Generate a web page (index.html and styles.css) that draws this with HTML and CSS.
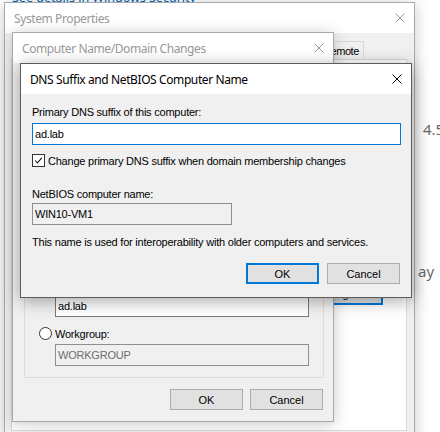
FILE: index.html
```html
<!DOCTYPE html>
<html>
<head>
<meta charset="utf-8">
<link rel="stylesheet" href="styles.css">
</head>
<body>
<div class="desk">
  <div class="bgwin">
    <span class="bg-link">See details in Windows Security</span>
    <span class="bg-num">4.5</span>
    <span class="bg-ay">ay</span>
  </div>

  <div class="win sysprops">
    <div class="titlebar inactive">
      <span class="title">System Properties</span>
      <svg class="close" viewBox="0 0 10 10"><path d="M0.5 0.5L9.5 9.5M9.5 0.5L0.5 9.5"/></svg>
    </div>
    <div class="sp-body">
      <div class="tabs">
        <span class="tab">Remote</span>
      </div>
      <div class="tabpage">
        <div class="change-row"><span class="btn btn-focus">Change...</span></div>
      </div>
    </div>
  </div>

  <div class="win cn">
    <div class="titlebar inactive">
      <span class="title">Computer Name/Domain Changes</span>
      <svg class="close" viewBox="0 0 10 10"><path d="M0.5 0.5L9.5 9.5M9.5 0.5L0.5 9.5"/></svg>
    </div>
    <div class="cn-body">
      <div class="groupbox">
        <div class="radio-row"><span class="radio"></span><span>Domain:</span></div>
        <div class="field field-white cn-field">ad.lab</div>
        <div class="radio-row wg-row"><span class="radio"></span><span>Workgroup:</span></div>
        <div class="field field-disabled cn-field wg-field">WORKGROUP</div>
      </div>
      <div class="btn-row cn-btns">
        <span class="btn">OK</span>
        <span class="btn">Cancel</span>
      </div>
    </div>
  </div>

  <div class="win dns">
    <div class="titlebar active">
      <span class="title">DNS Suffix and NetBIOS Computer Name</span>
      <svg class="close" viewBox="0 0 10 10"><path d="M0.5 0.5L9.5 9.5M9.5 0.5L0.5 9.5"/></svg>
    </div>
    <div class="dns-body">
      <div class="label">Primary DNS suffix of this computer:</div>
      <div class="field field-white field-focus dns-suffix">ad.lab</div>
      <div class="check-row">
        <span class="checkbox"><svg viewBox="0 0 13 13"><path d="M2.5 6.5L5.2 9.3L10.5 3.3"/></svg></span>
        <span>Change primary DNS suffix when domain membership changes</span>
      </div>
      <div class="label netbios-label">NetBIOS computer name:</div>
      <div class="field field-disabled netbios-field">WIN10-VM1</div>
      <div class="label info">This name is used for interoperability with older computers and services.</div>
      <div class="btn-row dns-btns">
        <span class="btn btn-default">OK</span>
        <span class="btn">Cancel</span>
      </div>
    </div>
  </div>
</div>
</body>
</html>
```

FILE: styles.css
```css
* { box-sizing: border-box; }
html, body { margin: 0; padding: 0; }
body {
  width: 440px;
  height: 432px;
  overflow: hidden;
  background: #ffffff;
  font-family: "Liberation Sans", Arial, sans-serif;
  font-size: 11px;
  letter-spacing: -0.22px;
  color: #000;
}
.desk { position: relative; width: 440px; height: 432px; overflow: hidden; }

/* background window fragments */
.bgwin { position: absolute; left: 0; top: 0; width: 440px; height: 432px; }
.bg-link {
  position: absolute; left: 12px; top: -10px;
  font-family: "Noto Sans", sans-serif; font-size: 12.5px; line-height: 16px;
  letter-spacing: 0; color: #0063b1; white-space: nowrap;
}
.bg-num, .bg-ay {
  position: absolute;
  font-family: "Noto Sans", sans-serif; font-size: 15px; line-height: 20px;
  letter-spacing: 0; color: #6b6b6b;
}
.bg-num { left: 423px; top: 119px; }
.bg-ay { left: 418px; top: 261px; }

/* windows */
.win {
  position: absolute;
  display: flex;
  flex-direction: column;
  background: #f0f0f0;
  border: 1px solid #a9a9a9;
  box-shadow: 0 2px 14px rgba(0, 0, 0, 0.22);
}
.titlebar {
  flex: none;
  height: 30px;
  background: #fff;
  display: flex;
  align-items: center;
  justify-content: space-between;
  padding: 0 9px 0 9px;
  font-family: "Noto Sans", sans-serif;
  font-size: 12px;
  letter-spacing: -0.4px;
}
.titlebar .close { width: 10px; height: 10px; display: block; }
.titlebar .close path { stroke-width: 1; fill: none; }
.inactive .title { color: #999; }
.inactive .close path { stroke: #999; }
.active .title { color: #000; }
.active .close path { stroke: #000; }

/* System Properties */
.sysprops { left: 4px; top: 2px; width: 411px; height: 445px; }
.sp-body { flex: 1; display: flex; flex-direction: column; padding: 8px 7px 0 6px; }
.tabs { display: flex; justify-content: flex-end; height: 18px; padding-right: 43px; }
.tab {
  display: flex; align-items: center; justify-content: center;
  padding: 1px 4px 0 6px; border: 1px solid #d9d9d9; border-bottom: none;
  background: #f0f0f0; letter-spacing: -0.4px;
}
.tabpage {
  height: 372px;
  background: #fff;
  border: 1px solid #d9d9d9;
  padding: 222px 23px 0 0;
}
.change-row { display: flex; justify-content: flex-end; }

/* buttons */
.btn {
  display: flex; align-items: center; justify-content: center;
  width: 73px; height: 21px;
  background: #e1e1e1; border: 1px solid #adadad;
  letter-spacing: 0;
}
.btn-focus { width: 86px; height: 23px; border: 2px solid #0078d7; }
.btn-default { border: 2px solid #0078d7; }
.btn-row { display: flex; justify-content: flex-end; }

/* Computer Name window */
.cn { left: 12px; top: 32px; width: 322px; height: 390px; }
.cn-body {
  flex: 1; display: flex; flex-direction: column; justify-content: flex-end;
  padding: 0 9px 11px 11px;
}
.groupbox { border: 1px solid #dcdcdc; padding: 0 14px 11px 14px; }
.radio-row { display: flex; align-items: center; gap: 3px; height: 13px; }
.radio {
  width: 13px; height: 13px; border-radius: 50%;
  border: 1px solid #333; background: #fff;
}
.field {
  height: 22px; border: 1px solid #7a7a7a;
  display: flex; align-items: center; padding-left: 2px;
}
.field-white { background: #fff; }
.field-disabled { background: #f0f0f0; border-color: #8f8f8f; }
.cn-field { margin: 4px 0 0 16px; }
.wg-row { margin-top: 10px; }
.wg-field { color: #6d6d6d; }
.cn-btns { margin-top: 11px; gap: 7px; padding-right: 1px; }

/* DNS dialog */
.dns {
  left: 20px; top: 63px; width: 392px; height: 235px;
  border-color: #5c5c5c;
  box-shadow: 0 3px 16px rgba(0, 0, 0, 0.35);
}
.dns-body { flex: 1; display: flex; flex-direction: column; padding: 12px 10px 0 11px; }
.label { line-height: 13px; }
.field-focus { border-color: #0078d7; }
.dns-suffix { margin-top: 4px; }
.check-row { display: flex; align-items: center; gap: 3px; height: 13px; margin-top: 9px; }
.checkbox {
  width: 13px; height: 13px; border: 1px solid #333; background: #fff;
  display: block;
}
.checkbox svg { display: block; width: 11px; height: 11px; }
.checkbox path { fill: none; stroke: #000; stroke-width: 1.2; }
.netbios-label { margin-top: 21px; }
.netbios-field { width: 200px; margin-top: 2px; }
.info { margin-top: 11px; }
.dns-btns { margin-top: 14px; gap: 8px; padding-right: 1px; }
```
